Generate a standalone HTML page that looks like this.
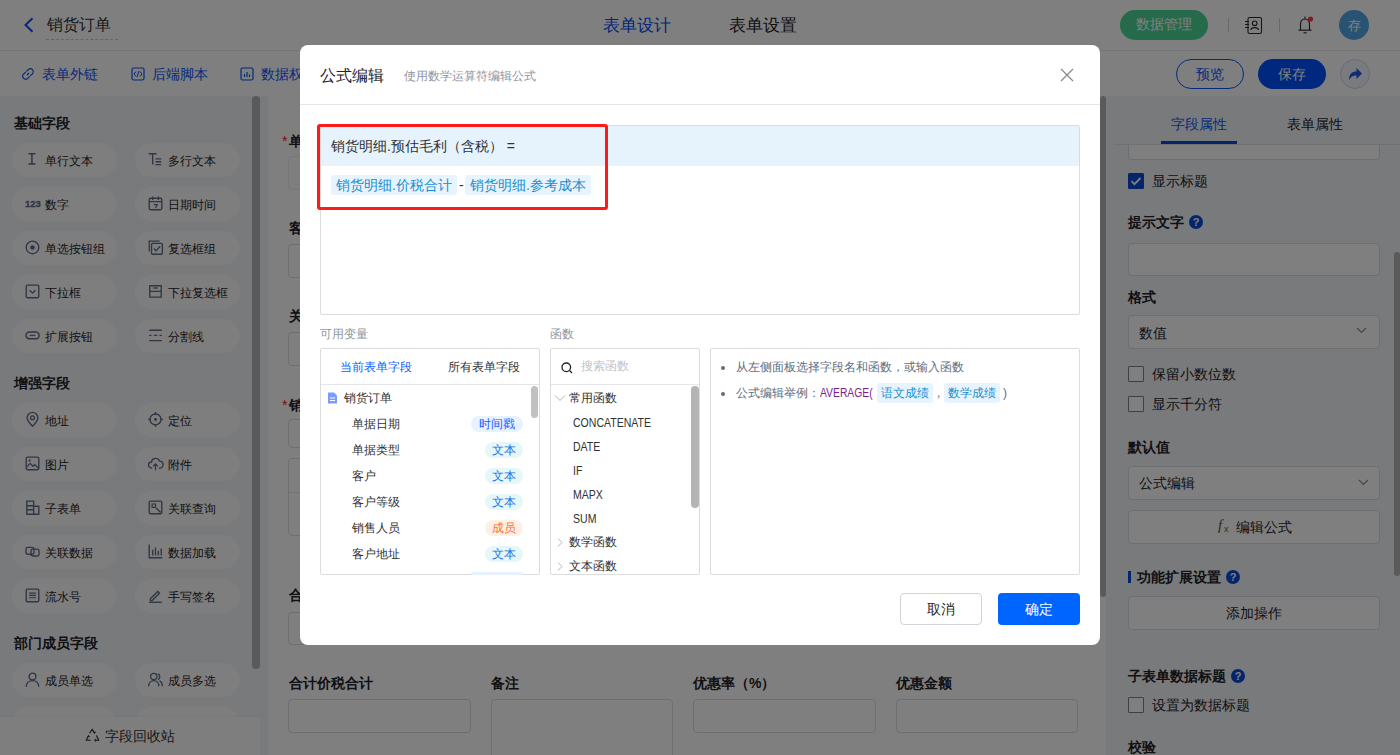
<!DOCTYPE html>
<html><head><meta charset="utf-8">
<style>
*{box-sizing:border-box;margin:0;padding:0}
html,body{width:1400px;height:755px;overflow:hidden;background:#fff;font-family:"Liberation Sans",sans-serif;color:#1f2329}
.a{position:absolute}
.t{position:absolute;white-space:nowrap;line-height:1}
/* header */
#hdr{left:0;top:0;width:1400px;height:51px;background:#fff;border-bottom:1px solid #e9eaec}
#tb{left:0;top:51px;width:1400px;height:45px;background:#fff}
#side{left:0;top:96px;width:260px;height:659px;background:#f2f4f8}
.h{font-size:14px;font-weight:bold;color:#1f2329}
.pill{position:absolute;width:105px;height:34px;border-radius:17px;background:#fdfdfd}
.pill .ic{position:absolute;left:16px;top:11px;width:12px;height:12px}
.pill span{position:absolute;left:33px;top:11px;font-size:12px;line-height:12px;color:#1f2329;white-space:nowrap}
#canvas{left:260px;top:96px;width:846px;height:659px;background:#f2f4f8}
#card{left:268px;top:96px;width:838px;height:659px;background:#fff}
.lbl{position:absolute;font-size:14px;font-weight:bold;line-height:14px;color:#1f2329;white-space:nowrap}
.inp{position:absolute;border:1px solid #dcdfe6;border-radius:4px;background:#fff}
#rp{left:1106px;top:96px;width:294px;height:659px;background:#f3f4f7}
.rinp{position:absolute;left:1128px;width:252px;height:33px;border:1px solid #dcdfe6;border-radius:4px;background:#fff}
.cb{position:absolute;left:1128px;width:16px;height:16px;border:1px solid #7d8089;border-radius:1px;background:#fff}
.rt{position:absolute;font-size:14px;line-height:14px;color:#1f2329;white-space:nowrap}
.q{position:absolute;width:14px;height:14px;border-radius:7px;background:#0b4bd6;color:#fff;font-size:11px;line-height:14px;text-align:center;font-weight:bold}
#mask{left:0;top:0;width:1400px;height:755px;background:rgba(0,0,0,.5)}
/* modal */
#modal{left:300px;top:45px;width:800px;height:600px;background:#fff;border-radius:8px}
.m{position:absolute}
.panel{position:absolute;border:1px solid #dcdcdc;border-radius:2px;background:#fff}
.tag{position:absolute;height:20px;border-radius:3px;background:#e8f4fd;color:#1a8fd0;font-size:13px;line-height:20px;padding:0 5px;white-space:nowrap}
.vrow{position:absolute;left:32px;font-size:12px;line-height:12px;color:#303133;white-space:nowrap}
.vtag{position:absolute;height:16px;border-radius:8px;font-size:12px;line-height:16px;text-align:center;white-space:nowrap}
.fn{position:absolute;font-size:12px;line-height:12px;color:#303133;white-space:nowrap}
</style></head><body>

<!-- ============ HEADER ============ -->
<div id="hdr" class="a"></div>
<svg class="a" style="left:22px;top:17px" width="13" height="16" viewBox="0 0 13 16"><path d="M10.5 1.2 L3.5 8 L10.5 14.8" fill="none" stroke="#0b4ff0" stroke-width="2"/></svg>
<div class="t" style="left:47px;top:17px;font-size:16px;color:#333">销货订单</div>
<div class="a" style="left:46px;top:39px;width:72px;border-top:1px dashed #c8cad0"></div>
<div class="t" style="left:603px;top:17px;font-size:17px;color:#0a4cf0">表单设计</div>
<div class="t" style="left:729px;top:17px;font-size:17px;color:#222">表单设置</div>
<div class="a" style="left:1120px;top:10px;width:88px;height:30px;border-radius:15px;background:#48d496"></div>
<div class="t" style="left:1136px;top:17px;font-size:14px;color:#fff">数据管理</div>
<div class="a" style="left:1228px;top:18px;width:1px;height:14px;background:#cfd2d8"></div>
<div class="a" style="left:1279px;top:18px;width:1px;height:14px;background:#cfd2d8"></div>
<svg class="a" style="left:1243px;top:16px" width="20" height="19" viewBox="0 0 20 19"><rect x="5" y="1.5" width="13.5" height="16" rx="1.5" fill="none" stroke="#2a2a2a" stroke-width="1.1"/><circle cx="11.7" cy="7.3" r="2.3" fill="none" stroke="#2a2a2a" stroke-width="1.1"/><path d="M7.8 14 C8.3 10.8 15 10.8 15.6 14" fill="none" stroke="#2a2a2a" stroke-width="1.1"/><path d="M2 5.5h4M2 8.5h4M2 11.5h4" stroke="#2a2a2a" stroke-width="1"/></svg>
<svg class="a" style="left:1296px;top:15px" width="20" height="20" viewBox="0 0 20 20"><path d="M4.5 15 L4.5 9.5 C4.5 6 6.5 4 9 4 C11.5 4 13.5 6 13.5 9.5 L13.5 15" fill="none" stroke="#2a2a2a" stroke-width="1.15"/><path d="M2.5 15.2h13" stroke="#2a2a2a" stroke-width="1.15"/><path d="M7.5 17.8h3" stroke="#2a2a2a" stroke-width="1.1"/><path d="M9 1.5v2.3" stroke="#2a2a2a" stroke-width="1.1"/><circle cx="14.5" cy="4" r="2.6" fill="#ff3b3b"/></svg>
<div class="a" style="left:1339px;top:10px;width:30px;height:30px;border-radius:15px;background:#52a6e6"></div>
<div class="t" style="left:1347px;top:19px;font-size:13px;color:#fff;width:15px;text-align:center">存</div>

<!-- ============ TOOLBAR ============ -->
<div id="tb" class="a"></div>
<svg class="a" style="left:21px;top:67px" width="14" height="14" viewBox="0 0 14 14"><path d="M6 8 L8 6" stroke="#0b55fa" stroke-width="1.2"/><path d="M5.2 4.6 L7.2 2.6 C8.4 1.4 10.2 1.4 11.4 2.6 C12.6 3.8 12.6 5.6 11.4 6.8 L9.4 8.8" fill="none" stroke="#0b55fa" stroke-width="1.2"/><path d="M8.8 9.4 L6.8 11.4 C5.6 12.6 3.8 12.6 2.6 11.4 C1.4 10.2 1.4 8.4 2.6 7.2 L4.6 5.2" fill="none" stroke="#0b55fa" stroke-width="1.2"/></svg>
<div class="t" style="left:42px;top:67px;font-size:14px;color:#0b55fa">表单外链</div>
<svg class="a" style="left:131px;top:67px" width="14" height="14" viewBox="0 0 14 14"><rect x="1" y="1" width="12" height="12" rx="1.5" fill="none" stroke="#0b55fa" stroke-width="1.2"/><path d="M5 4.5 L3 7 L5 9.5 M9 4.5 L11 7 L9 9.5 M8 4 L6 10" fill="none" stroke="#0b55fa" stroke-width="1"/></svg>
<div class="t" style="left:152px;top:67px;font-size:14px;color:#0b55fa">后端脚本</div>
<svg class="a" style="left:240px;top:67px" width="14" height="14" viewBox="0 0 14 14"><rect x="1" y="1" width="12" height="12" rx="1.5" fill="none" stroke="#0b55fa" stroke-width="1.2"/><path d="M4.5 10V7 M7 10V5 M9.5 10V7.5" stroke="#0b55fa" stroke-width="1.2"/></svg>
<div class="t" style="left:261px;top:67px;font-size:14px;color:#0b55fa">数据权限</div>
<div class="a" style="left:1176px;top:59px;width:68px;height:30px;border-radius:15px;border:1px solid #0b55fa;background:#fff"></div>
<div class="t" style="left:1196px;top:67px;font-size:14px;color:#0b55fa">预览</div>
<div class="a" style="left:1258px;top:59px;width:68px;height:30px;border-radius:15px;background:#0050ff"></div>
<div class="t" style="left:1278px;top:67px;font-size:14px;color:#fff">保存</div>
<div class="a" style="left:1340px;top:59px;width:30px;height:30px;border-radius:15px;border:1px solid #cdd8f2;background:#f3f6fd"></div>
<svg class="a" style="left:1346px;top:65px" width="18" height="18" viewBox="0 0 18 18"><path d="M3 15 C3 9 6 6.5 10.5 6.5 L10.5 3 L16 8.5 L10.5 14 L10.5 10.5 C7 10.5 4.8 11.8 3 15 Z" fill="#1e5ae6"/></svg>

<!-- ============ SIDEBAR ============ -->
<div id="side" class="a"></div>
<div class="t h" style="left:14px;top:116px">基础字段</div>
<div class="t h" style="left:14px;top:376px">增强字段</div>
<div class="t h" style="left:14px;top:636px">部门成员字段</div>
<div class="pill" style="left:12px;top:143px"></div><svg class="a" style="left:25px;top:152px;overflow:visible" width="15" height="16" viewBox="0 0 13 14"><path d="M3 1.5h6M6 1.5v9M3 10.5h6" stroke="#5f6d88" stroke-width="1.3" fill="none"/></svg><div class="t" style="left:45px;top:155px;font-size:12px;color:#1f2329">单行文本</div>
<div class="pill" style="left:135px;top:143px"></div><svg class="a" style="left:148px;top:152px;overflow:visible" width="15" height="16" viewBox="0 0 13 14"><path d="M0.5 1.5h7M4 1.5v9.5M6.5 6h5M6.5 8.5h5M6.5 11h5" stroke="#5f6d88" stroke-width="1.2" fill="none"/></svg><div class="t" style="left:168px;top:155px;font-size:12px;color:#1f2329">多行文本</div>
<div class="pill" style="left:12px;top:187px"></div><div class="t" style="left:25px;top:199px;font-size:9.5px;font-weight:700;color:#5f6d88;letter-spacing:0px;-webkit-text-stroke:0.3px #5f6d88">123</div><div class="t" style="left:45px;top:199px;font-size:12px;color:#1f2329">数字</div>
<div class="pill" style="left:135px;top:187px"></div><svg class="a" style="left:148px;top:196px;overflow:visible" width="15" height="16" viewBox="0 0 13 14"><rect x="1" y="2" width="11" height="10" rx="1.2" stroke="#5f6d88" stroke-width="1.2" fill="none"/><path d="M1 5h11M4 0.5v3M9 0.5v3M5 7.5h3l-1.5 3" stroke="#5f6d88" stroke-width="1.1" fill="none"/></svg><div class="t" style="left:168px;top:199px;font-size:12px;color:#1f2329">日期时间</div>
<div class="pill" style="left:12px;top:231px"></div><svg class="a" style="left:25px;top:240px;overflow:visible" width="15" height="16" viewBox="0 0 13 14"><circle cx="6.5" cy="6.5" r="5.5" stroke="#5f6d88" stroke-width="1.2" fill="none"/><circle cx="6.5" cy="6.5" r="2" fill="#5f6d88"/></svg><div class="t" style="left:45px;top:243px;font-size:12px;color:#1f2329">单选按钮组</div>
<div class="pill" style="left:135px;top:231px"></div><svg class="a" style="left:148px;top:240px;overflow:visible" width="15" height="16" viewBox="0 0 13 14"><path d="M1 10V1h9" stroke="#5f6d88" stroke-width="1.1" fill="none"/><rect x="3" y="3" width="9.5" height="9.5" rx="1" stroke="#5f6d88" stroke-width="1.2" fill="none"/><path d="M5 7.5l2 2 3.5-4" stroke="#5f6d88" stroke-width="1.2" fill="none"/></svg><div class="t" style="left:168px;top:243px;font-size:12px;color:#1f2329">复选框组</div>
<div class="pill" style="left:12px;top:275px"></div><svg class="a" style="left:25px;top:284px;overflow:visible" width="15" height="16" viewBox="0 0 13 14"><rect x="1" y="1" width="11" height="11" rx="1.2" stroke="#5f6d88" stroke-width="1.2" fill="none"/><path d="M4 5.5l2.5 2.5 2.5-2.5" stroke="#5f6d88" stroke-width="1.2" fill="none"/></svg><div class="t" style="left:45px;top:287px;font-size:12px;color:#1f2329">下拉框</div>
<div class="pill" style="left:135px;top:275px"></div><svg class="a" style="left:148px;top:284px;overflow:visible" width="15" height="16" viewBox="0 0 13 14"><path d="M1.5 1.5h10v5h-10z M1.5 6.5v5h10v-5" stroke="#5f6d88" stroke-width="1.2" fill="none"/><path d="M4.5 3.5h4" stroke="#5f6d88" stroke-width="1.2"/></svg><div class="t" style="left:168px;top:287px;font-size:12px;color:#1f2329">下拉复选框</div>
<div class="pill" style="left:12px;top:319px"></div><svg class="a" style="left:25px;top:328px;overflow:visible" width="15" height="16" viewBox="0 0 13 14"><rect x="0.8" y="3.5" width="11.5" height="6" rx="3" stroke="#5f6d88" stroke-width="1.3" fill="none"/><path d="M4 6.5h5" stroke="#5f6d88" stroke-width="1.1"/></svg><div class="t" style="left:45px;top:331px;font-size:12px;color:#1f2329">扩展按钮</div>
<div class="pill" style="left:135px;top:319px"></div><svg class="a" style="left:148px;top:328px;overflow:visible" width="15" height="16" viewBox="0 0 13 14"><path d="M1 2h11M1 6.5h2M5 6.5h3M10 6.5h2M1 11h11" stroke="#5f6d88" stroke-width="1.2" fill="none"/></svg><div class="t" style="left:168px;top:331px;font-size:12px;color:#1f2329">分割线</div>
<div class="pill" style="left:12px;top:403px"></div><svg class="a" style="left:25px;top:412px;overflow:visible" width="15" height="16" viewBox="0 0 13 14"><path d="M6.5 12.5C3 9 1.8 7 1.8 5A4.7 4.7 0 0 1 11.2 5C11.2 7 10 9 6.5 12.5z" stroke="#5f6d88" stroke-width="1.2" fill="none"/><circle cx="6.5" cy="5" r="1.7" stroke="#5f6d88" stroke-width="1.1" fill="none"/></svg><div class="t" style="left:45px;top:415px;font-size:12px;color:#1f2329">地址</div>
<div class="pill" style="left:135px;top:403px"></div><svg class="a" style="left:148px;top:412px;overflow:visible" width="15" height="16" viewBox="0 0 13 14"><circle cx="6.5" cy="6.5" r="4.8" stroke="#5f6d88" stroke-width="1.2" fill="none"/><circle cx="6.5" cy="6.5" r="1.3" fill="#5f6d88"/><path d="M6.5 0v2.5M6.5 10.5V13M0 6.5h2.5M10.5 6.5H13" stroke="#5f6d88" stroke-width="1.2"/></svg><div class="t" style="left:168px;top:415px;font-size:12px;color:#1f2329">定位</div>
<div class="pill" style="left:12px;top:447px"></div><svg class="a" style="left:25px;top:456px;overflow:visible" width="15" height="16" viewBox="0 0 13 14"><rect x="1" y="1" width="11" height="11" rx="1.2" stroke="#5f6d88" stroke-width="1.2" fill="none"/><path d="M1.5 9.5l3-3 2.5 2.5 1.5-1.5 3 3" stroke="#5f6d88" stroke-width="1.1" fill="none"/><circle cx="4" cy="4" r="1" fill="#5f6d88"/></svg><div class="t" style="left:45px;top:459px;font-size:12px;color:#1f2329">图片</div>
<div class="pill" style="left:135px;top:447px"></div><svg class="a" style="left:148px;top:456px;overflow:visible" width="15" height="16" viewBox="0 0 13 14"><path d="M3.5 10.5H3A2.6 2.6 0 0 1 3 5.3 3.6 3.6 0 0 1 10 4.5 2.8 2.8 0 0 1 10.2 10.5H9.5" stroke="#5f6d88" stroke-width="1.2" fill="none"/><path d="M6.5 12.5V7M4.5 9l2-2 2 2" stroke="#5f6d88" stroke-width="1.1" fill="none"/></svg><div class="t" style="left:168px;top:459px;font-size:12px;color:#1f2329">附件</div>
<div class="pill" style="left:12px;top:491px"></div><svg class="a" style="left:25px;top:500px;overflow:visible" width="15" height="16" viewBox="0 0 13 14"><path d="M1.5 1h6v11.5h-6zM7.5 5.5h4.5v7h-4.5M1.5 5h6M1.5 8.5h6" stroke="#5f6d88" stroke-width="1.2" fill="none"/></svg><div class="t" style="left:45px;top:503px;font-size:12px;color:#1f2329">子表单</div>
<div class="pill" style="left:135px;top:491px"></div><svg class="a" style="left:148px;top:500px;overflow:visible" width="15" height="16" viewBox="0 0 13 14"><rect x="1" y="1" width="11" height="11" rx="1" stroke="#5f6d88" stroke-width="1.2" fill="none"/><path d="M3.5 3.5h3v3h-3z" stroke="#5f6d88" stroke-width="1" fill="none"/><path d="M7 7l4 4" stroke="#5f6d88" stroke-width="1.2"/></svg><div class="t" style="left:168px;top:503px;font-size:12px;color:#1f2329">关联查询</div>
<div class="pill" style="left:12px;top:535px"></div><svg class="a" style="left:25px;top:544px;overflow:visible" width="15" height="16" viewBox="0 0 13 14"><rect x="0.8" y="3" width="7" height="6" rx="1.5" stroke="#5f6d88" stroke-width="1.2" fill="none"/><rect x="5.2" y="4.5" width="7" height="6" rx="1.5" stroke="#5f6d88" stroke-width="1.2" fill="none"/></svg><div class="t" style="left:45px;top:547px;font-size:12px;color:#1f2329">关联数据</div>
<div class="pill" style="left:135px;top:535px"></div><svg class="a" style="left:148px;top:544px;overflow:visible" width="15" height="16" viewBox="0 0 13 14"><path d="M1 0.5V12h11.5M4 10V5M6.5 10V3M9 10V6M11.5 10V4" stroke="#5f6d88" stroke-width="1.2" fill="none"/></svg><div class="t" style="left:168px;top:547px;font-size:12px;color:#1f2329">数据加载</div>
<div class="pill" style="left:12px;top:579px"></div><svg class="a" style="left:25px;top:588px;overflow:visible" width="15" height="16" viewBox="0 0 13 14"><rect x="1" y="1" width="11" height="11" rx="1" stroke="#5f6d88" stroke-width="1.2" fill="none"/><path d="M3.5 4.5h6M3.5 6.5h6M3.5 8.5h6" stroke="#5f6d88" stroke-width="1"/></svg><div class="t" style="left:45px;top:591px;font-size:12px;color:#1f2329">流水号</div>
<div class="pill" style="left:135px;top:579px"></div><svg class="a" style="left:148px;top:588px;overflow:visible" width="15" height="16" viewBox="0 0 13 14"><path d="M2 9.5L8.5 3l1.5 1.5L3.5 11H2z" stroke="#5f6d88" stroke-width="1.2" fill="none"/><path d="M1 12.5h11" stroke="#5f6d88" stroke-width="1.2"/></svg><div class="t" style="left:168px;top:591px;font-size:12px;color:#1f2329">手写签名</div>
<div class="pill" style="left:12px;top:663px"></div><svg class="a" style="left:25px;top:672px;overflow:visible" width="15" height="16" viewBox="0 0 13 14"><circle cx="6.5" cy="4" r="3" stroke="#5f6d88" stroke-width="1.2" fill="none"/><path d="M1 13c0-3.5 2.5-5.5 5.5-5.5s5.5 2 5.5 5.5" stroke="#5f6d88" stroke-width="1.2" fill="none"/></svg><div class="t" style="left:45px;top:675px;font-size:12px;color:#1f2329">成员单选</div>
<div class="pill" style="left:135px;top:663px"></div><svg class="a" style="left:148px;top:672px;overflow:visible" width="15" height="16" viewBox="0 0 13 14"><circle cx="5" cy="4" r="2.8" stroke="#5f6d88" stroke-width="1.2" fill="none"/><path d="M0.5 12.5c0-3 2-5 4.5-5s4.5 2 4.5 5M8.5 1.5a2.8 2.8 0 0 1 0 5.2M10 7.8c1.5.6 2.5 2.4 2.5 4.7" stroke="#5f6d88" stroke-width="1.2" fill="none"/></svg><div class="t" style="left:168px;top:675px;font-size:12px;color:#1f2329">成员多选</div>
<div class="pill" style="left:12px;top:707px"></div><div class="pill" style="left:135px;top:707px"></div>
<div class="a" style="left:252px;top:96px;width:8px;height:573px;border-radius:4px;background:#b4b4b4"></div>
<div class="a" style="left:0;top:717px;width:260px;height:38px;background:#fdfdfd;box-shadow:0 -1px 2px rgba(0,0,0,0.04)"></div>
<svg class="a" style="left:85px;top:728px" width="15" height="15" viewBox="0 0 15 15"><path d="M4.6 5.2 L7.2 1.2 L9.8 5.2" fill="none" stroke="#2a2a2a" stroke-width="1.1" stroke-linejoin="round"/><path d="M8.3 4.6 L9.8 5.2 L10.2 3.6" fill="none" stroke="#2a2a2a" stroke-width="1"/><path d="M11.4 7.6 L13.8 12.2 L9.8 12.2" fill="none" stroke="#2a2a2a" stroke-width="1.1" stroke-linejoin="round"/><path d="M10.8 10.8 L9.6 12.2 L10.8 13.6" fill="none" stroke="#2a2a2a" stroke-width="1"/><path d="M5.6 12.2 L1.2 12.2 L3.6 7.8" fill="none" stroke="#2a2a2a" stroke-width="1.1" stroke-linejoin="round"/><path d="M2.4 8.6 L3.6 7.6 L4.6 9" fill="none" stroke="#2a2a2a" stroke-width="1"/></svg>
<div class="t" style="left:105px;top:729px;font-size:14px;color:#333">字段回收站</div>


<!-- ============ CANVAS ============ -->
<div id="canvas" class="a"></div>
<div id="card" class="a"></div>
<div class="a" style="left:1100px;top:96px;width:6px;height:501px;border-radius:3px;background:#b4b4b4"></div>
<div class="t" style="left:282px;top:134px;font-size:14px;color:#f5222d">*</div><div class="lbl" style="left:289px;top:134px">单据日期</div>
<div class="inp" style="left:288px;top:156px;width:380px;height:34px;background:#fcfcfd;border-color:#eceef2"></div>
<div class="lbl" style="left:289px;top:221px">客户</div>
<div class="inp" style="left:288px;top:244px;width:380px;height:34px"></div>
<div class="lbl" style="left:289px;top:309px">关联</div>
<div class="inp" style="left:288px;top:332px;width:380px;height:34px"></div>
<div class="t" style="left:282px;top:398px;font-size:14px;color:#f5222d">*</div><div class="lbl" style="left:289px;top:398px">销货明细</div>
<div class="inp" style="left:288px;top:419px;width:790px;height:29px"></div>
<div class="inp" style="left:288px;top:458px;width:790px;height:78px"></div>
<div class="a" style="left:289px;top:492px;width:788px;height:1px;background:#e5e6eb"></div>
<div class="lbl" style="left:289px;top:588px">合计</div>
<div class="inp" style="left:288px;top:612px;width:183px;height:33px"></div>
<div class="lbl" style="left:289px;top:676px">合计价税合计</div>
<div class="inp" style="left:288px;top:699px;width:183px;height:34px"></div>
<div class="lbl" style="left:491px;top:676px">备注</div>
<div class="inp" style="left:491px;top:699px;width:182px;height:70px"></div>
<div class="lbl" style="left:693px;top:676px">优惠率（%）</div>
<div class="inp" style="left:693px;top:699px;width:183px;height:34px"></div>
<div class="lbl" style="left:896px;top:676px">优惠金额</div>
<div class="inp" style="left:896px;top:699px;width:182px;height:34px"></div>


<!-- ============ RIGHT PANEL ============ -->
<div id="rp" class="a"></div>
<div class="t" style="left:1171px;top:117px;font-size:14px;color:#0b55fa">字段属性</div>
<div class="t" style="left:1287px;top:117px;font-size:14px;color:#1f2329">表单属性</div>
<div class="a" style="left:1114px;top:144px;width:286px;height:1px;background:#dfe1e6"></div>
<div class="a" style="left:1161px;top:141px;width:76px;height:3px;background:#0b4bd6"></div>
<div class="rinp" style="top:127px;height:33px;border-top:none;border-radius:0 0 4px 4px;top:145px;height:15px"></div>
<div class="cb" style="top:173px;background:#0b4bd6;border-color:#0b4bd6"></div>
<svg class="a" style="left:1128px;top:173px" width="16" height="16" viewBox="0 0 16 16"><path d="M3.5 8.2l3 3 6-6.2" stroke="#fff" stroke-width="1.8" fill="none"/></svg>
<div class="rt" style="left:1152px;top:174px">显示标题</div>
<div class="lbl" style="left:1128px;top:215px">提示文字</div>
<div class="q" style="left:1189px;top:215px">?</div>
<div class="rinp" style="top:243px"></div>
<div class="lbl" style="left:1128px;top:290px">格式</div>
<div class="rinp" style="top:315px;height:34px"></div>
<div class="rt" style="left:1139px;top:326px">数值</div>
<svg class="a" style="left:1356px;top:327px" width="11" height="7" viewBox="0 0 11 7"><path d="M1 1l4.5 4.5L10 1" stroke="#8a8a8a" stroke-width="1.2" fill="none"/></svg>
<div class="cb" style="top:366px"></div>
<div class="rt" style="left:1152px;top:367px">保留小数位数</div>
<div class="cb" style="top:396px"></div>
<div class="rt" style="left:1152px;top:397px">显示千分符</div>
<div class="lbl" style="left:1128px;top:440px">默认值</div>
<div class="rinp" style="top:466px;height:34px"></div>
<div class="rt" style="left:1139px;top:476px">公式编辑</div>
<svg class="a" style="left:1358px;top:479px" width="11" height="7" viewBox="0 0 11 7"><path d="M1 1l4.5 4.5L10 1" stroke="#8a8a8a" stroke-width="1.2" fill="none"/></svg>
<div class="rinp" style="top:510px;height:34px"></div>
<div class="t" style="left:1218px;top:518px;font-size:15px;font-style:italic;font-family:'Liberation Serif',serif;color:#555">f</div>
<div class="t" style="left:1224px;top:525px;font-size:9px;color:#555">x</div>
<div class="rt" style="left:1236px;top:520px">编辑公式</div>
<div class="a" style="left:1128px;top:571px;width:3px;height:12px;background:#0b4bd6"></div>
<div class="lbl" style="left:1137px;top:570px">功能扩展设置</div>
<div class="q" style="left:1226px;top:570px">?</div>
<div class="rinp" style="top:596px;height:34px"></div>
<div class="rt" style="left:1226px;top:606px">添加操作</div>
<div class="lbl" style="left:1128px;top:669px">子表单数据标题</div>
<div class="q" style="left:1231px;top:669px">?</div>
<div class="cb" style="top:697px"></div>
<div class="rt" style="left:1152px;top:698px">设置为数据标题</div>
<div class="lbl" style="left:1128px;top:740px">校验</div>
<div class="a" style="left:1394px;top:252px;width:6px;height:324px;border-radius:3px;background:#b4b4b4"></div>


<!-- ============ MASK ============ -->
<div id="mask" class="a"></div>

<!-- ============ MODAL ============ -->
<div id="modal" class="a"></div>
<div class="t" style="left:320px;top:68px;font-size:16px;color:#1f2329">公式编辑</div>
<div class="t" style="left:404px;top:70px;font-size:12px;color:#8f959e">使用数学运算符编辑公式</div>
<svg class="a" style="left:1059px;top:67px" width="16" height="16" viewBox="0 0 16 16"><path d="M2 2L14 14M14 2L2 14" stroke="#8a8a8a" stroke-width="1.3"/></svg>
<div class="a" style="left:300px;top:104px;width:800px;height:1px;background:#e5e6eb"></div>
<!-- formula box -->
<div class="panel" style="left:320px;top:125px;width:760px;height:190px"></div>
<div class="a" style="left:321px;top:126px;width:758px;height:40px;background:#e6f3fd"></div>
<div class="t" style="left:331px;top:139px;font-size:14px;color:#303133">销货明细.预估毛利（含税） =</div>
<div class="tag" style="left:331px;top:175px;font-size:14px">销货明细.价税合计</div>
<div class="t" style="left:459px;top:178px;font-size:14px;color:#303133">-</div>
<div class="tag" style="left:465px;top:175px;font-size:14px">销货明细.参考成本</div>
<div class="a" style="left:317px;top:124px;width:291px;height:86px;border:3px solid #ff1a1a;border-radius:3px"></div>
<!-- labels -->
<div class="t" style="left:320px;top:328px;font-size:12px;color:#8f959e">可用变量</div>
<div class="t" style="left:550px;top:328px;font-size:12px;color:#8f959e">函数</div>
<!-- variable panel -->
<div class="panel" style="left:320px;top:348px;width:220px;height:227px"></div>
<div class="t" style="left:340px;top:361px;font-size:12px;color:#1060ff">当前表单字段</div>
<div class="t" style="left:448px;top:361px;font-size:12px;color:#303133">所有表单字段</div>
<div class="a" style="left:321px;top:384px;width:218px;height:1px;background:#e5e6eb"></div>
<svg class="a" style="left:327px;top:392px" width="11" height="12" viewBox="0 0 11 12"><path d="M1 0.5h6l3 3v8H1z" fill="#7b9cff"/><path d="M3 6h5M3 8.5h5" stroke="#fff" stroke-width="1"/></svg>
<div class="t" style="left:344px;top:392px;font-size:12px;color:#303133">销货订单</div>
<div class="a" style="left:531px;top:386px;width:7px;height:32px;border-radius:3.5px;background:#c1c1c1"></div>
<!-- function panel -->
<div class="panel" style="left:550px;top:348px;width:150px;height:227px"></div>
<svg class="a" style="left:561px;top:362px" width="12" height="12" viewBox="0 0 12 12"><circle cx="5.3" cy="5.3" r="4.3" stroke="#222" stroke-width="1.3" fill="none"/><path d="M8.5 8.5l2.5 2.5" stroke="#222" stroke-width="1.3"/></svg>
<div class="t" style="left:581px;top:360px;font-size:12px;color:#c0c4cc">搜索函数</div>
<div class="a" style="left:551px;top:384px;width:148px;height:1px;background:#e5e6eb"></div>
<svg class="a" style="left:554px;top:394px" width="12" height="8" viewBox="0 0 12 8"><path d="M1 1.5l5 5 5-5" stroke="#b0b4bb" stroke-width="1" fill="none"/></svg>
<div class="fn" style="left:569px;top:392px">常用函数</div>
<div class="a" style="left:691px;top:386px;width:8px;height:122px;border-radius:4px;background:#b4b4b4"></div>
<!-- desc panel -->
<div class="panel" style="left:710px;top:348px;width:370px;height:227px"></div>
<div class="a" style="left:721px;top:366px;width:4px;height:4px;border-radius:2px;background:#5e6d82"></div>
<div class="t" style="left:736px;top:361px;font-size:12px;color:#5e6d82">从左侧面板选择字段名和函数，或输入函数</div>
<div class="a" style="left:721px;top:392px;width:4px;height:4px;border-radius:2px;background:#5e6d82"></div>
<div class="t" style="left:736px;top:387px;font-size:12px;color:#5e6d82">公式编辑举例：</div>
<div class="t" style="left:820px;top:387px;font-size:12px;color:#7d1f8c;transform:scaleX(0.86);transform-origin:0 0">AVERAGE(</div>
<div class="tag" style="left:877px;top:383px;font-size:12px;width:56px;padding:0 0 0 4px">语文成绩</div>
<div class="t" style="left:937px;top:387px;font-size:12px;color:#5e6d82">,</div>
<div class="tag" style="left:944px;top:383px;font-size:12px;width:56px;padding:0 0 0 4px">数学成绩</div>
<div class="t" style="left:1003px;top:387px;font-size:12px;color:#5e6d82">)</div>
<!-- buttons -->
<div class="a" style="left:900px;top:593px;width:82px;height:32px;border:1px solid #d0d3d9;border-radius:4px;background:#fff"></div>
<div class="t" style="left:927px;top:602px;font-size:14px;color:#1f2329">取消</div>
<div class="a" style="left:998px;top:593px;width:82px;height:32px;border-radius:4px;background:#0064ff"></div>
<div class="t" style="left:1025px;top:602px;font-size:14px;color:#fff">确定</div>
<div class="t" style="left:352px;top:418px;font-size:12px;color:#303133">单据日期</div>
<div class="vtag" style="left:471px;top:416px;width:52px;background:#e8f1ff;color:#1060ff">时间戳</div>
<div class="t" style="left:352px;top:444px;font-size:12px;color:#303133">单据类型</div>
<div class="vtag" style="left:485px;top:442px;width:38px;background:#e6f7f7;color:#1a73e8">文本</div>
<div class="t" style="left:352px;top:470px;font-size:12px;color:#303133">客户</div>
<div class="vtag" style="left:485px;top:468px;width:38px;background:#e6f7f7;color:#1a73e8">文本</div>
<div class="t" style="left:352px;top:496px;font-size:12px;color:#303133">客户等级</div>
<div class="vtag" style="left:485px;top:494px;width:38px;background:#e6f7f7;color:#1a73e8">文本</div>
<div class="t" style="left:352px;top:522px;font-size:12px;color:#303133">销售人员</div>
<div class="vtag" style="left:485px;top:520px;width:38px;background:#fff0e6;color:#f77234">成员</div>
<div class="t" style="left:352px;top:548px;font-size:12px;color:#303133">客户地址</div>
<div class="vtag" style="left:485px;top:546px;width:38px;background:#e6f7f7;color:#1a73e8">文本</div>
<div class="vtag" style="left:471px;top:572px;width:52px;height:3px;background:#e8f1ff"></div>
<div class="fn" style="left:573px;top:416px;font-size:13px;line-height:13px;transform:scaleX(0.81);transform-origin:0 0">CONCATENATE</div>
<div class="fn" style="left:573px;top:440px;font-size:13px;line-height:13px;transform:scaleX(0.81);transform-origin:0 0">DATE</div>
<div class="fn" style="left:573px;top:464px;font-size:13px;line-height:13px;transform:scaleX(0.81);transform-origin:0 0">IF</div>
<div class="fn" style="left:573px;top:488px;font-size:13px;line-height:13px;transform:scaleX(0.81);transform-origin:0 0">MAPX</div>
<div class="fn" style="left:573px;top:512px;font-size:13px;line-height:13px;transform:scaleX(0.81);transform-origin:0 0">SUM</div>
<svg class="a" style="left:556px;top:537px" width="8" height="11" viewBox="0 0 8 11"><path d="M2 1.5l4 4-4 4" stroke="#b0b4bb" stroke-width="1" fill="none"/></svg>
<div class="fn" style="left:569px;top:536px">数学函数</div>
<svg class="a" style="left:556px;top:561px" width="8" height="11" viewBox="0 0 8 11"><path d="M2 1.5l4 4-4 4" stroke="#b0b4bb" stroke-width="1" fill="none"/></svg>
<div class="fn" style="left:569px;top:560px">文本函数</div>


</body></html>
